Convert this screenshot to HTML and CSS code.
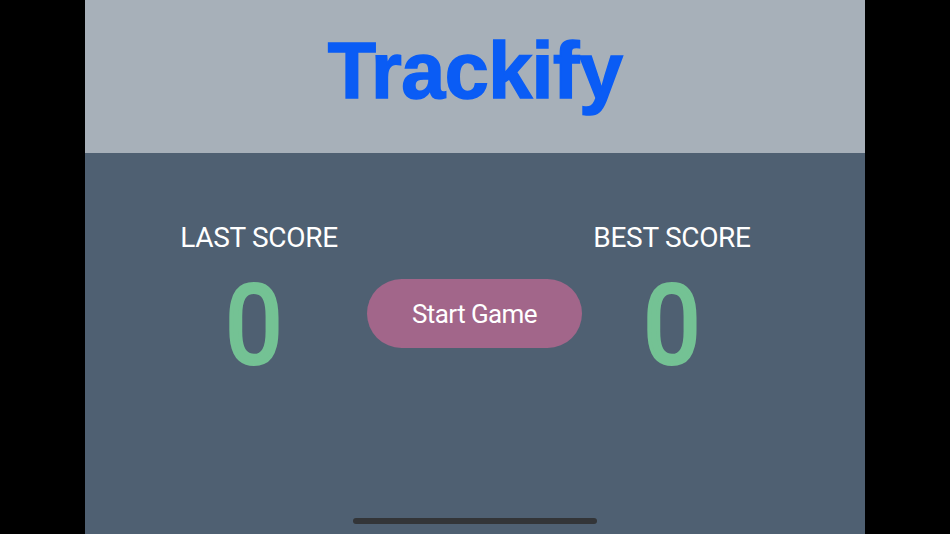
FILE: index.html
```html
<!DOCTYPE html>
<html>
<head>
<meta charset="utf-8">
<link rel="stylesheet" href="styles.css">
</head>
<body>
<div class="frame">
  <div class="app">
    <header class="header">
      <h1 class="title">Trackify</h1>
    </header>
    <main class="main">
      <div class="scores">
        <div class="score score-left">
          <div class="label">LAST SCORE</div>
          <div class="value">0</div>
        </div>
        <button class="start">Start Game</button>
        <div class="score score-right">
          <div class="label">BEST SCORE</div>
          <div class="value">0</div>
        </div>
      </div>
      <div class="home-indicator"></div>
    </main>
  </div>
</div>
</body>
</html>
```
FILE: styles.css
```css
html, body {
  margin: 0;
  padding: 0;
  background: #000;
}
.frame {
  width: 950px;
  height: 534px;
  display: flex;
  justify-content: center;
  background: #000;
}
.app {
  width: 780px;
  height: 534px;
  display: flex;
  flex-direction: column;
  font-family: Roboto, "Liberation Sans", sans-serif;
}
.header {
  height: 153px;
  background: #a7b0b9;
  display: flex;
  justify-content: center;
}
.title {
  margin: 0;
  margin-top: 26px;
  font-family: "Liberation Sans", Arial, sans-serif;
  font-weight: 700;
  font-size: 79px;
  line-height: 90px;
  color: #0a5cf5;
  letter-spacing: -0.5px;
  -webkit-text-stroke: 1.6px #0a5cf5;
}
.main {
  flex: 1;
  background: #4f6072;
  display: flex;
  flex-direction: column;
  position: relative;
}
.scores {
  display: flex;
  align-items: flex-start;
  padding-left: 84px;
  padding-top: 68px;
}
.score {
  width: 180px;
  display: flex;
  flex-direction: column;
  align-items: center;
}
.score-left {
  margin-right: 18px;
}
.label {
  color: #ffffff;
  font-size: 28px;
  line-height: 34px;
  letter-spacing: -0.3px;
}
.value {
  color: #74c294;
  font-size: 110px;
  font-weight: 400;
  line-height: 116px;
  margin-top: 13px;
  margin-right: 10px;
  -webkit-text-stroke: 4px #74c294;
  transform: scaleX(0.92);
}
.score-right .value {
  margin-right: 0;
}
.start {
  margin-top: 58px;
  width: 215px;
  height: 69px;
  border: none;
  border-radius: 35px;
  background: #a2668a;
  color: #ffffff;
  font-family: Roboto, "Liberation Sans", sans-serif;
  font-size: 26px;
  font-weight: 400;
  letter-spacing: -0.6px;
  padding: 0;
}
.home-indicator {
  position: absolute;
  left: 268px;
  bottom: 10px;
  width: 244px;
  height: 6px;
  border-radius: 3px;
  background: #333538;
}
```
